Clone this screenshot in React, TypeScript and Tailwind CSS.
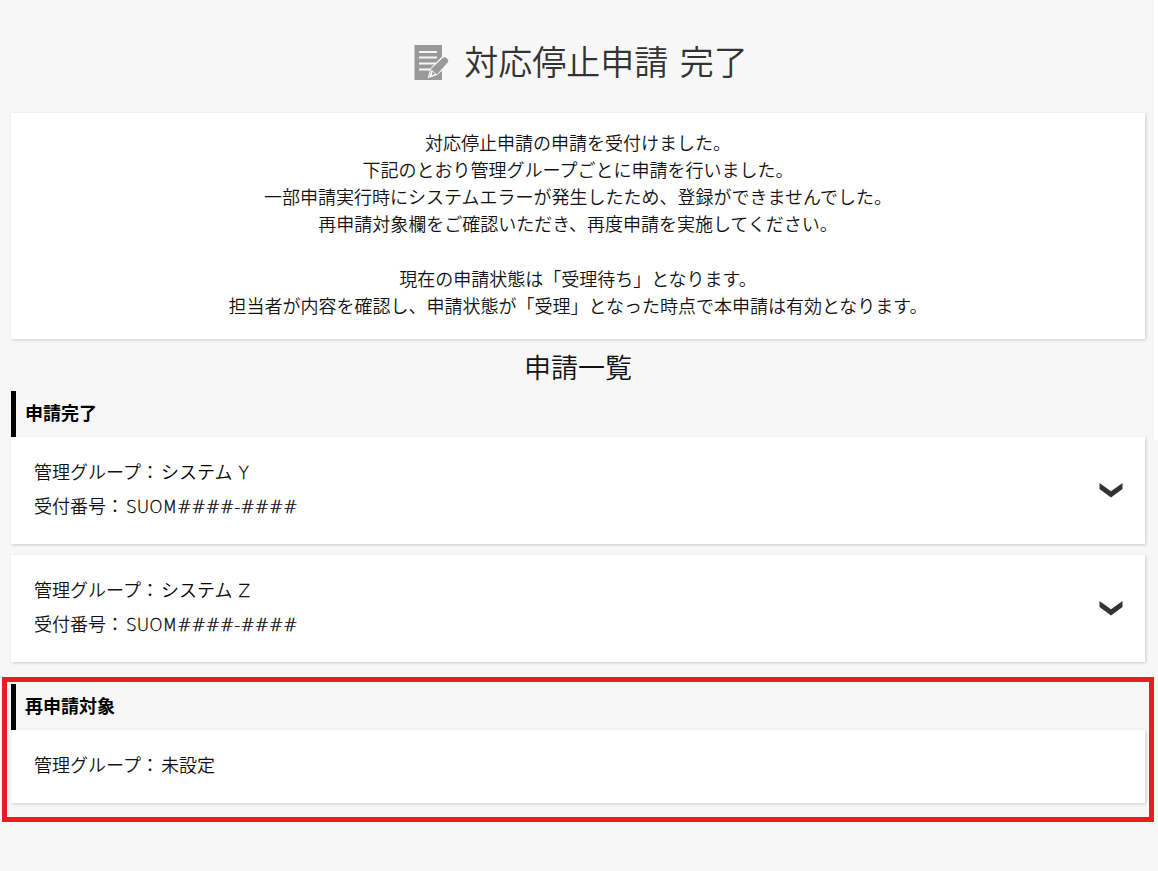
import React from 'react';

type Application = { system: string; code: string; receipt: string };

const completed: Application[] = [
  { system: 'システム', code: 'Y', receipt: 'SUOM####-####' },
  { system: 'システム', code: 'Z', receipt: 'SUOM####-####' },
];

function FormIcon() {
  return (
    <svg width="36" height="36" viewBox="0 0 36 36" aria-hidden="true" className="shrink-0">
      <path d="M0.5 0H28V35H0.5Z" fill="#999" />
      <path d="M5 7H23M5 12.5H23M5 18.5H23M5 24.5H16" stroke="#f7f7f7" strokeWidth="2" fill="none" />
      <path d="M14 33L16.5 23.5L29 10.5L37 18L24 31Z" fill="#f7f7f7" />
      <path d="M10 33.5L18 32L28 26V35H10Z" fill="#999" />
      <path
        d="M16.6 23.8L28.8 12.4Q30.5 11 32.4 12.5L34 14Q35.6 15.8 34 17.6L23.5 29.5L14.3 32.5Z"
        fill="#999"
        stroke="#f7f7f7"
        strokeWidth="1"
      />
      <path d="M17.6 24.8L22.8 29.6L15.2 32Z" fill="#f7f7f7" />
      <path d="M18.6 26.4L21.2 29L17.8 30.2Z" fill="#999" />
    </svg>
  );
}

function Chevron() {
  return (
    <svg width="24" height="15" viewBox="0 0 24 15" aria-hidden="true" className="shrink-0">
      <path d="M0.5 0L12 8.2L23.5 0V6L12 14.5L0.5 6Z" fill="#333" />
    </svg>
  );
}

function SectionHeading({ children }: { children: React.ReactNode }) {
  return (
    <h3 className="border-l-[5px] border-black pb-1 pl-[9px] text-lg leading-[42px] font-bold text-black">
      {children}
    </h3>
  );
}

function Latin({ children }: { children: React.ReactNode }) {
  return (
    <span className="font-['DejaVu_Sans',sans-serif] text-[17px] font-extralight text-black [-webkit-text-stroke:0.3px_black]">
      {children}
    </span>
  );
}

function ApplicationCard({ system, code, receipt }: Application) {
  return (
    <button
      type="button"
      aria-expanded="false"
      className="flex w-full items-center justify-between bg-white py-[17px] pr-[22px] pl-[23px] text-left shadow-[1px_1px_3px_rgba(0,0,0,0.18)]"
    >
      <span className="block pb-[5px] text-lg leading-[34px]">
        <span className="flex h-[34px] items-baseline gap-[2px]">
          <span>管理グループ：</span>
          <span className="flex items-baseline gap-[6px] text-black">
            {system} <Latin>{code}</Latin>
          </span>
        </span>
        <span className="flex h-[34px] items-baseline gap-[2px]">
          <span>受付番号：</span>
          <Latin>{receipt}</Latin>
        </span>
      </span>
      <Chevron />
    </button>
  );
}

export default function App() {
  return (
    <main
      lang="ja"
      className="relative min-h-screen bg-[#f7f7f7] font-['Noto_Sans_CJK_JP',sans-serif] font-[350] text-[#111]"
    >
      <div aria-hidden="true" className="absolute top-0 right-0 h-[440px] w-1 bg-white" />

      <header className="flex items-center justify-center gap-[14px] pt-9 pb-6 pl-1">
        <FormIcon />
        <h1 className="pb-1 text-[34px] leading-[49px] text-[#333]">
          対応停止申請 <span className="ml-1">完了</span>
        </h1>
      </header>

      <div className="pr-[13px] pl-[11px]">
        <section className="bg-white px-4 pt-4 pb-[20px] text-center text-lg leading-[27px] shadow-[1px_1px_3px_rgba(0,0,0,0.18)]">
          <p>
            対応停止申請の申請を受付けました。
            <br />
            下記のとおり管理グループごとに申請を行いました。
            <br />
            一部申請実行時にシステムエラーが発生したため、登録ができませんでした。
            <br />
            再申請対象欄をご確認いただき、再度申請を実施してください。
          </p>
          <p className="mt-7">
            現在の申請状態は「受理待ち」となります。
            <br />
            担当者が内容を確認し、申請状態が「受理」となった時点で本申請は有効となります。
          </p>
        </section>

        <h2 className="pt-2 pb-1 text-center text-[27px] leading-10">申請一覧</h2>

        <section>
          <SectionHeading>申請完了</SectionHeading>
          <div className="flex flex-col gap-[11px]">
            {completed.map((item) => (
              <ApplicationCard key={item.code} {...item} />
            ))}
          </div>
        </section>
      </div>

      <section className="mt-[15px] mr-1 ml-[2px] border-[5px] border-[#ed1c24] px-1 pt-[2px] pb-[14px]">
        <SectionHeading>再申請対象</SectionHeading>
        <div className="flex gap-[2px] bg-white pt-[17px] pr-[22px] pb-[22px] pl-[23px] text-lg leading-[34px] shadow-[1px_1px_3px_rgba(0,0,0,0.18)]">
          <span>管理グループ：</span>
          <span>未設定</span>
        </div>
      </section>
    </main>
  );
}
